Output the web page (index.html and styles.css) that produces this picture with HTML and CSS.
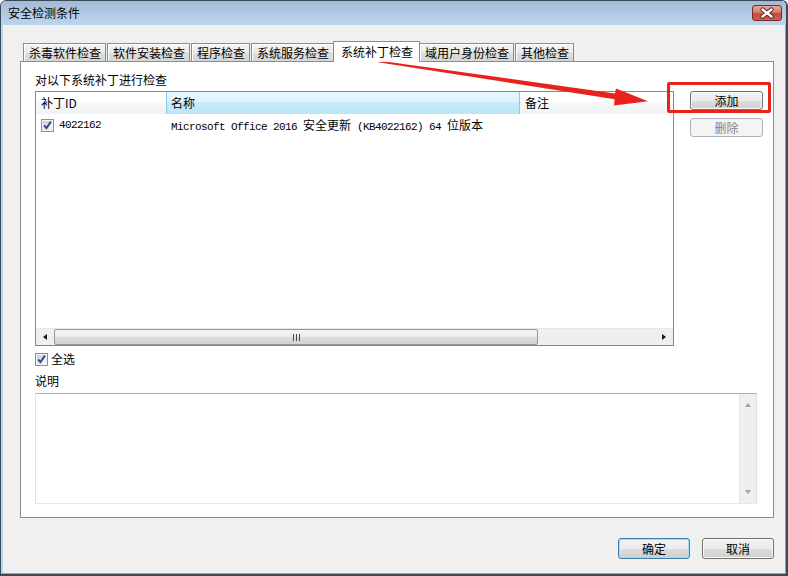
FILE: index.html
```html
<!DOCTYPE html>
<html lang="zh-CN">
<head>
<meta charset="utf-8">
<title>安全检测条件</title>
<link rel="stylesheet" href="styles.css">
</head>
<body>
<div class="window">
  <div class="titlebar">
    <span class="title">安全检测条件</span>
    <div class="close">
      <svg width="28" height="14" viewBox="0 0 28 14">
        <path d="M9.5 3.5 L18.5 10.5 M18.5 3.5 L9.5 10.5" stroke="#4b231e" stroke-width="4.2" stroke-linecap="round" fill="none"/>
        <path d="M9.5 3.5 L18.5 10.5 M18.5 3.5 L9.5 10.5" stroke="#ffffff" stroke-width="2.4" stroke-linecap="round" fill="none"/>
      </svg>
    </div>
  </div>
  <div class="client">
    <div class="tabs">
      <div class="tab">杀毒软件检查</div>
      <div class="tab">软件安装检查</div>
      <div class="tab">程序检查</div>
      <div class="tab">系统服务检查</div>
      <div class="tab active">系统补丁检查</div>
      <div class="tab">域用户身份检查</div>
      <div class="tab">其他检查</div>
    </div>
    <div class="panel">
      <div class="label">对以下系统补丁进行检查</div>
      <div class="main">
        <div class="list">
          <div class="lv-head">
            <div class="hc c1">补丁ID</div>
            <div class="hc c2 hot">名称</div>
            <div class="hc c3">备注</div>
          </div>
          <div class="lv-body">
            <div class="lv-row">
              <div class="cell c1">
                <svg class="cb" width="13" height="13" viewBox="0 0 13 13">
                  <defs><linearGradient id="cbA" x1="0" y1="0" x2="1" y2="1"><stop offset="0" stop-color="#cbd0d7"/><stop offset="1" stop-color="#f7f7f7"/></linearGradient></defs>
                  <rect x="0.5" y="0.5" width="12" height="12" fill="#f4f4f4" stroke="#8e8f8f"/>
                  <rect x="2" y="2" width="9" height="9" fill="url(#cbA)"/>
                  <path d="M3.2 6.4 L5.4 9.2 L9.9 2.6" stroke="#2b4796" stroke-width="1.9" fill="none"/>
                </svg>
                <span class="mono">4022162</span>
              </div>
              <div class="cell c2"><span class="mono">Microsoft Office 2016 </span>安全更新<span class="mono"> (KB4022162) 64 </span>位版本</div>
            </div>
          </div>
          <div class="hscroll">
            <div class="hs-btn"><span class="tri-left"></span></div>
            <div class="hs-thumb"><span class="grip"></span></div>
            <div class="hs-track"></div>
            <div class="hs-btn"><span class="tri-right"></span></div>
          </div>
        </div>
        <div class="side">
          <button class="btn">添加</button>
          <button class="btn" disabled>删除</button>
        </div>
      </div>
      <div class="chkrow">
        <svg class="cb" width="13" height="13" viewBox="0 0 13 13">
          <defs><linearGradient id="cbB" x1="0" y1="0" x2="1" y2="1"><stop offset="0" stop-color="#cbd0d7"/><stop offset="1" stop-color="#f7f7f7"/></linearGradient></defs>
          <rect x="0.5" y="0.5" width="12" height="12" fill="#f4f4f4" stroke="#8e8f8f"/>
          <rect x="2" y="2" width="9" height="9" fill="url(#cbB)"/>
          <path d="M3.2 6.4 L5.4 9.2 L9.9 2.6" stroke="#2b4796" stroke-width="1.9" fill="none"/>
        </svg>
        <span>全选</span>
      </div>
      <div class="label desc">说明</div>
      <div class="textarea">
        <div class="vscroll">
          <span class="tri-up"></span>
          <span class="tri-down"></span>
        </div>
      </div>
    </div>
    <div class="footer">
      <button class="btn default">确定</button>
      <button class="btn">取消</button>
    </div>
  </div>
  <div class="highlight"></div>
  <svg class="arrow" width="290" height="60" viewBox="370 55 290 60">
    <polygon points="378,60.6 615,93.4 616,88.6 648,101.2 614,105.6 614.6,99.2 378,62.2" fill="#e8231c"/>
  </svg>
</div>
</body>
</html>
```

FILE: styles.css
```css
html, body {
  margin: 0;
  padding: 0;
  background: #ffffff;
}

body {
  font-family: "Noto Sans CJK SC", "Liberation Sans", sans-serif;
  font-size: 12px;
  line-height: 16px;
  color: #000;
}

.window {
  position: relative;
  width: 788px;
  height: 576px;
  box-sizing: border-box;
  border-style: solid;
  border-color: #3c4a58;
  border-width: 1px 2px 2px 1px;
  border-radius: 6px 6px 0 0;
  background: #f0f0f0;
  display: flex;
  flex-direction: column;
  overflow: hidden;
}

.titlebar {
  height: 24px;
  flex: none;
  display: flex;
  align-items: flex-start;
  padding-left: 7px;
  background: linear-gradient(#a2bad6, #b4cce6 60%, #bcd4ec);
}

.title {
  line-height: 24px;
  color: #000;
}

.close {
  margin: 4px 4px 0 auto;
  width: 30px;
  height: 16px;
  box-sizing: border-box;
  border: 1px solid #6e2e28;
  border-radius: 3px;
  background: linear-gradient(#e6aa9c, #d67a6b 45%, #c5493b 55%, #cf5f4f);
  display: flex;
  align-items: center;
  justify-content: center;
}

.close svg {
  display: block;
}

.client {
  flex: 1;
  display: flex;
  flex-direction: column;
  box-sizing: border-box;
  border-left: 2px solid #b5d9f1;
  border-right: 1px solid #43c1ee;
  border-bottom: 1px solid #43c1ee;
  padding: 16px 11px 0 17px;
}

.tabs {
  display: flex;
  align-items: flex-end;
  gap: 1px;
  height: 20px;
  padding-left: 3px;
}

.tab {
  height: 18px;
  box-sizing: border-box;
  border: 1px solid #898c95;
  border-bottom: 0;
  padding: 0 4px 0 5px;
  line-height: 17px;
  white-space: nowrap;
  background: linear-gradient(#f3f3f3, #ebebeb 50%, #dedede 51%, #d6d6d6);
  box-shadow: inset 1px 1px 0 #ffffff;
}

.tab.active {
  height: 21px;
  margin: 0 -2px -1px;
  padding: 0 6px 0 7px;
  line-height: 19px;
  background: #ffffff;
  box-shadow: none;
  position: relative;
  z-index: 1;
}

.panel {
  height: 457px;
  box-sizing: border-box;
  border: 1px solid #898c95;
  background: #ffffff;
  padding: 10px 0 0 14px;
  display: flex;
  flex-direction: column;
  align-items: flex-start;
}

.label {
  line-height: 16px;
  height: 16px;
}

.main {
  display: flex;
  margin-top: 3px;
}

.list {
  width: 639px;
  height: 255px;
  box-sizing: border-box;
  border: 1px solid #828790;
  display: flex;
  flex-direction: column;
}

.lv-head {
  display: flex;
  height: 22px;
  flex: none;
  background: linear-gradient(#ffffff 0%, #ffffff 45%, #f7f8fa 46%, #f1f2f4 100%);
}

.hc {
  line-height: 22px;
  padding-left: 5px;
  box-sizing: border-box;
  white-space: nowrap;
}

.c1 {
  width: 130px;
  flex: none;
}

.c2 {
  width: 354px;
  flex: none;
}

.hc.c2.hot {
  border-left: 1px solid #88c8e8;
  border-right: 1px solid #88c8e8;
  padding-left: 4px;
  background: linear-gradient(#e6f6fd 0%, #dff3fc 45%, #c8eaf9 46%, #bde5f7 100%);
}

.c3 {
  flex: 1;
}

.lv-body {
  flex: 1;
}

.lv-row {
  display: flex;
  height: 20px;
  padding-top: 1px;
  line-height: 20px;
}

.cell {
  box-sizing: border-box;
  padding-left: 5px;
  white-space: pre;
}

.cell.c1 {
  display: flex;
  align-items: center;
  gap: 5px;
}

.cb {
  display: block;
  flex: none;
}

.mono {
  font-family: "Liberation Mono", "DejaVu Sans Mono", monospace;
  font-size: 11px;
  letter-spacing: -0.6px;
  white-space: pre;
}

.hscroll {
  height: 17px;
  flex: none;
  display: flex;
  background: #efefef;
  border-top: 1px solid #e8e8e8;
  box-sizing: border-box;
}

.hs-btn {
  width: 18px;
  flex: none;
  display: flex;
  align-items: center;
  justify-content: center;
}

.tri-left {
  width: 0;
  height: 0;
  border-top: 3.5px solid transparent;
  border-bottom: 3.5px solid transparent;
  border-right: 4px solid #1a1a1a;
}

.tri-right {
  width: 0;
  height: 0;
  border-top: 3.5px solid transparent;
  border-bottom: 3.5px solid transparent;
  border-left: 4px solid #1a1a1a;
}

.hs-thumb {
  width: 484px;
  flex: none;
  box-sizing: border-box;
  border: 1px solid #979797;
  border-radius: 2px;
  background: linear-gradient(#f5f5f5, #ececec 45%, #dcdcdc 55%, #d2d2d2);
  display: flex;
  align-items: center;
  justify-content: center;
}

.grip {
  width: 7px;
  height: 7px;
  background: repeating-linear-gradient(90deg, #4a4a4a 0 1px, transparent 1px 3px);
}

.hs-track {
  flex: 1;
}

.side {
  margin-left: 16px;
  display: flex;
  flex-direction: column;
  gap: 8px;
}

.btn {
  font-family: "Noto Sans CJK SC", "Liberation Sans", sans-serif;
  font-size: 12px;
  line-height: 16px;
  color: #000;
  width: 73px;
  height: 19px;
  box-sizing: border-box;
  padding: 0;
  border: 1px solid #707070;
  border-radius: 3px;
  background: linear-gradient(#f2f2f2 0%, #ebebeb 50%, #dddddd 51%, #cfcfcf 100%);
  box-shadow: inset 0 0 0 1px #fbfbfb;
}

.btn:disabled {
  border-color: #adb2b5;
  background: #f4f4f4;
  color: #838383;
  box-shadow: none;
}

.chkrow {
  display: flex;
  align-items: center;
  gap: 3px;
  height: 16px;
  margin-top: 5px;
}

.label.desc {
  margin-top: 6px;
}

.textarea {
  margin-top: 4px;
  width: 722px;
  height: 111px;
  box-sizing: border-box;
  border-style: solid;
  border-width: 1px;
  border-color: #abadb3 #dbdfe6 #e3e9ef #e2e3ea;
  display: flex;
  justify-content: flex-end;
}

.vscroll {
  width: 17px;
  box-sizing: border-box;
  background: #efefef;
  border-left: 1px solid #e6e6e6;
  display: flex;
  flex-direction: column;
  justify-content: space-between;
  align-items: center;
  padding: 9px 0 9px;
}

.tri-up {
  width: 0;
  height: 0;
  border-left: 3.5px solid transparent;
  border-right: 3.5px solid transparent;
  border-bottom: 4px solid #a3a3a3;
}

.tri-down {
  width: 0;
  height: 0;
  border-left: 3.5px solid transparent;
  border-right: 3.5px solid transparent;
  border-top: 4px solid #a3a3a3;
}

.footer {
  display: flex;
  justify-content: flex-end;
  gap: 12px;
  margin-top: 20px;
}

.footer .btn {
  width: 72px;
  height: 21px;
}

.btn.default {
  border-color: #3c7fb1;
  box-shadow: inset 0 0 0 1px #9fdcf6;
}

.highlight {
  position: absolute;
  left: 666px;
  top: 81px;
  width: 104px;
  height: 31px;
  box-sizing: border-box;
  border: 3px solid #e5251c;
  border-radius: 2px;
  pointer-events: none;
}

.arrow {
  position: absolute;
  left: 369px;
  top: 54px;
  pointer-events: none;
}
```
